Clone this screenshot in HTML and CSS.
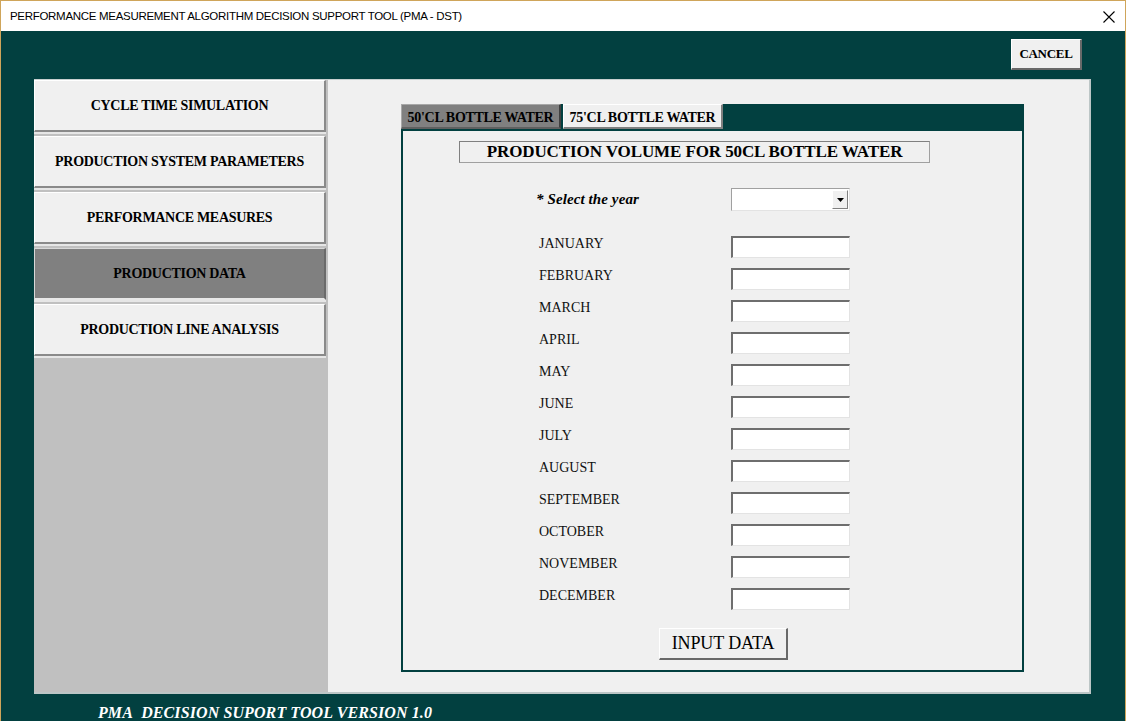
FILE: index.html
```html
<!DOCTYPE html>
<html>
<head>
<meta charset="utf-8">
<link rel="stylesheet" href="styles.css">
</head>
<body>
<div class="window">
  <div class="titlebar">
    <span class="title">PERFORMANCE MEASUREMENT ALGORITHM DECISION SUPPORT TOOL (PMA - DST)</span>
    <svg class="close" width="12" height="12" viewBox="0 0 12 12"><path d="M0.5 0.5 L11.5 11.5 M11.5 0.5 L0.5 11.5" stroke="#000" stroke-width="1.1" fill="none"/></svg>
  </div>
  <div class="main">
    <div class="toolbar">
      <button class="btn cancel">CANCEL</button>
    </div>
    <div class="panel">
      <div class="sidebar">
        <button class="navbtn">CYCLE TIME SIMULATION</button>
        <button class="navbtn">PRODUCTION SYSTEM PARAMETERS</button>
        <button class="navbtn">PERFORMANCE MEASURES</button>
        <button class="navbtn active">PRODUCTION DATA</button>
        <button class="navbtn">PRODUCTION LINE ANALYSIS</button>
      </div>
      <div class="content">
        <div class="frame">
          <div class="tabs">
            <div class="tab selected">50'CL BOTTLE WATER</div>
            <div class="tab">75'CL BOTTLE WATER</div>
          </div>
          <div class="framebody">
            <div class="heading">PRODUCTION VOLUME FOR 50CL BOTTLE WATER</div>
            <div class="yearrow">
              <span class="yearlabel">* Select the year</span>
              <div class="combo"><span class="combofield"></span><span class="combobtn"><svg width="7" height="4" viewBox="0 0 7 4"><path d="M0 0 H7 L3.5 4 Z" fill="#000"/></svg></span></div>
            </div>
            <div class="months">
              <span class="mlabel">JANUARY</span><span class="field"></span>
              <span class="mlabel">FEBRUARY</span><span class="field"></span>
              <span class="mlabel">MARCH</span><span class="field"></span>
              <span class="mlabel">APRIL</span><span class="field"></span>
              <span class="mlabel">MAY</span><span class="field"></span>
              <span class="mlabel">JUNE</span><span class="field"></span>
              <span class="mlabel">JULY</span><span class="field"></span>
              <span class="mlabel">AUGUST</span><span class="field"></span>
              <span class="mlabel">SEPTEMBER</span><span class="field"></span>
              <span class="mlabel">OCTOBER</span><span class="field"></span>
              <span class="mlabel">NOVEMBER</span><span class="field"></span>
              <span class="mlabel">DECEMBER</span><span class="field"></span>
            </div>
            <div class="actions">
              <button class="btn inputbtn">INPUT DATA</button>
            </div>
          </div>
        </div>
      </div>
    </div>
    <div class="footer">PMA&nbsp; DECISION SUPORT TOOL VERSION 1.0</div>
  </div>
</div>
</body>
</html>
```
FILE: styles.css
```css
* { box-sizing: border-box; }
html, body {
  margin: 0;
  padding: 0;
  width: 1126px;
  height: 721px;
  overflow: hidden;
  background: #024040;
}
.window {
  width: 1126px;
  height: 721px;
  border: 1px solid #cfa55a;
  border-bottom: none;
  display: flex;
  flex-direction: column;
  background: #024040;
}
.titlebar {
  height: 30px;
  flex: none;
  background: #fff;
  display: flex;
  align-items: center;
  justify-content: space-between;
  padding: 0 10px 0 9px;
}
.title {
  font-family: "Liberation Sans", Arial, sans-serif;
  font-size: 11.5px;
  color: #000;
  letter-spacing: -0.3px;
}
.close { margin-top: 1px; }
.main {
  flex: 1;
  background: #024040;
  padding: 8px 0 0 33px;
  display: flex;
  flex-direction: column;
}
.toolbar {
  display: flex;
  justify-content: flex-end;
  padding-right: 43px;
  height: 31px;
}
.btn {
  font-family: "Liberation Serif", "Times New Roman", serif;
  color: #000;
  background: #f0f0f0;
  border-style: solid;
  border-width: 1px 2px 2px 1px;
  border-color: #ffffff #696969 #696969 #ffffff;
  padding: 0;
  margin: 0;
}
.cancel {
  width: 71px;
  height: 31px;
  font-size: 13px;
  font-weight: bold;
  letter-spacing: -0.3px;
}
.panel {
  margin-top: 9px;
  width: 1057px;
  height: 615px;
  display: flex;
  background: #f0f0f0;
  border-right: 2px solid #bcc6c6;
  border-bottom: 2px solid #bcc6c6;
  border-top: 1px solid #c8d0d0;
}
.sidebar {
  width: 294px;
  flex: none;
  background: #c0c0c0;
  display: flex;
  flex-direction: column;
  align-items: flex-start;
}
.navbtn {
  width: 292px;
  height: 52px;
  margin-bottom: 4px;
  background: #f0f0f0;
  border-style: solid;
  border-width: 1px 2px 2px 1px;
  border-color: #ffffff #8a8a8a #8a8a8a #ffffff;
  font-family: "Liberation Serif", "Times New Roman", serif;
  font-weight: bold;
  font-size: 14px;
  letter-spacing: -0.3px;
  color: #000;
  padding: 0;
  box-shadow: 0 2px 0 #e6e6e6;
}
.navbtn.active {
  background: #808080;
  border-color: #d8d8d8 #6a6a6a #e8e8e8 #d8d8d8;
}
.content {
  flex: 1;
  padding: 24px 0 0 73px;
}
.frame {
  width: 623px;
  height: 568px;
  display: flex;
  flex-direction: column;
}
.tabs {
  height: 27px;
  flex: none;
  background: #024040;
  display: flex;
  gap: 2px;
  align-items: flex-start;
}
.tab {
  height: 25px;
  width: 160px;
  display: flex;
  align-items: center;
  justify-content: center;
  padding-top: 3px;
  font-family: "Liberation Serif", "Times New Roman", serif;
  font-weight: bold;
  font-size: 14px;
  letter-spacing: -0.3px;
  color: #000;
  background: #f0f0f0;
  border-style: solid;
  border-width: 1px 2px 2px 1px;
  border-color: #ffffff #808080 #808080 #ffffff;
}
.tab.selected {
  background: #808080;
  border-color: #a8a8a8 #404040 #606060 #a8a8a8;
}
.framebody {
  flex: 1;
  border: 2px solid #024040;
  border-top: none;
  background: #f0f0f0;
  padding: 10px 0 0 56px;
}
.heading {
  width: 471px;
  height: 22px;
  border: 1px solid #808080;
  border-right-color: #a0a0a0;
  border-bottom-color: #a0a0a0;
  font-family: "Liberation Serif", "Times New Roman", serif;
  font-weight: bold;
  font-size: 17px;
  letter-spacing: -0.1px;
  display: flex;
  align-items: center;
  justify-content: center;
  color: #000;
}
.yearrow {
  margin-top: 25px;
  display: flex;
  align-items: center;
  height: 23px;
  padding-left: 77px;
}
.yearlabel {
  width: 195px;
  font-family: "Liberation Serif", "Times New Roman", serif;
  font-weight: bold;
  font-style: italic;
  font-size: 15px;
  color: #000;
  letter-spacing: 0.1px;
}
.combo {
  width: 119px;
  height: 23px;
  display: flex;
  background: #fff;
  border-style: solid;
  border-width: 1px;
  border-color: #a0a0a0 #e3e3e3 #e3e3e3 #a0a0a0;
  padding: 1px;
}
.combofield { flex: 1; }
.combobtn {
  width: 16px;
  background: #f0f0f0;
  border-style: solid;
  border-width: 1px;
  border-color: #ffffff #808080 #808080 #ffffff;
  display: flex;
  align-items: center;
  justify-content: center;
}
.months {
  margin-top: 25px;
  display: grid;
  grid-template-columns: 192px 119px;
  grid-auto-rows: 22px;
  row-gap: 10px;
  padding-left: 80px;
}
.mlabel {
  font-family: "Liberation Serif", "Times New Roman", serif;
  font-size: 14px;
  color: #111;
  line-height: 16px;
  letter-spacing: 0;
}
.field {
  background: #fff;
  border-style: solid;
  border-width: 2px 1px 1px 2px;
  border-color: #6e6e6e #e3e3e3 #e3e3e3 #6e6e6e;
}
.actions {
  margin-top: 18px;
  padding-left: 200px;
}
.inputbtn {
  width: 129px;
  height: 32px;
  font-size: 18px;
  letter-spacing: -0.1px;
}
.footer {
  margin-top: 10px;
  padding-left: 64px;
  font-family: "Liberation Serif", "Times New Roman", serif;
  font-weight: bold;
  font-style: italic;
  font-size: 16px;
  color: #fff;
  letter-spacing: 0.1px;
  line-height: 18px;
}
```
